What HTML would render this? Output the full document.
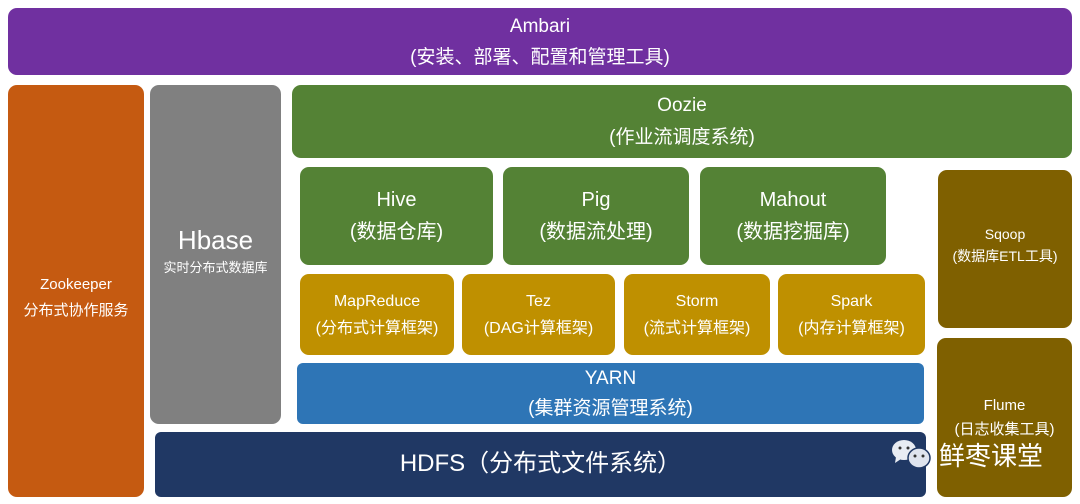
<!DOCTYPE html><html><head><meta charset="utf-8"><style>
body{margin:0;width:1080px;height:504px;background:#fff;position:relative;overflow:hidden;font-family:"Liberation Sans","Noto Sans CJK SC",sans-serif;color:#fff}
.b{position:absolute;border-radius:9px;display:flex;flex-direction:column;align-items:center;justify-content:center;text-align:center;line-height:1.6}
</style></head><body>
<div class="b" style="left:8px;top:8px;width:1064px;height:67px;background:#7030a0;font-size:19px;line-height:31px">Ambari<br>(安装、部署、配置和管理工具)</div>
<div class="b" style="left:8px;top:85px;width:136px;height:412px;background:#c55a11;font-size:15px;line-height:26px;padding-top:14px;box-sizing:border-box">Zookeeper<br>分布式协作服务</div>
<div class="b" style="left:150px;top:85px;width:131px;height:339px;background:#808080;font-size:13px;line-height:20px"><span style="font-size:26px;line-height:36px;margin-top:-10px">Hbase</span>实时分布式数据库</div>
<div class="b" style="left:292px;top:85px;width:780px;height:73px;background:#548235;font-size:19px;line-height:32px">Oozie<br>(作业流调度系统)</div>
<div class="b" style="left:300px;top:167px;width:193px;height:98px;background:#548235;font-size:20px;line-height:32px">Hive<br>(数据仓库)</div>
<div class="b" style="left:503px;top:167px;width:186px;height:98px;background:#548235;font-size:20px;line-height:32px">Pig<br>(数据流处理)</div>
<div class="b" style="left:700px;top:167px;width:186px;height:98px;background:#548235;font-size:20px;line-height:32px">Mahout<br>(数据挖掘库)</div>
<div class="b" style="left:300px;top:274px;width:154px;height:81px;background:#bf9000;font-size:16px;line-height:27px">MapReduce<br>(分布式计算框架)</div>
<div class="b" style="left:462px;top:274px;width:153px;height:81px;background:#bf9000;font-size:16px;line-height:27px">Tez<br>(DAG计算框架)</div>
<div class="b" style="left:624px;top:274px;width:146px;height:81px;background:#bf9000;font-size:16px;line-height:27px">Storm<br>(流式计算框架)</div>
<div class="b" style="left:778px;top:274px;width:147px;height:81px;background:#bf9000;font-size:16px;line-height:27px">Spark<br>(内存计算框架)</div>
<div class="b" style="left:297px;top:363px;width:627px;height:61px;background:#2e75b6;font-size:19px;line-height:30px;border-radius:6px">YARN<br>(集群资源管理系统)</div>
<div class="b" style="left:155px;top:432px;width:771px;height:65px;background:#203864;font-size:24px;border-radius:6px">HDFS（分布式文件系统）</div>
<div class="b" style="left:938px;top:170px;width:134px;height:158px;background:#7f6000;font-size:14px;line-height:22px;padding-bottom:8px;box-sizing:border-box">Sqoop<br>(数据库ETL工具)</div>
<div class="b" style="left:937px;top:338px;width:135px;height:159px;background:#7f6000;font-size:15px;line-height:24px">Flume<br>(日志收集工具)</div>
<svg style="position:absolute;left:890px;top:438px" width="50" height="36"><ellipse cx="14" cy="12" rx="12" ry="10" fill="#e8ecf3"/><path d="M6 19 L5 25 L11 21Z" fill="#e8ecf3"/><ellipse cx="29" cy="20" rx="11" ry="10" fill="#dfe4ee" stroke="#203864" stroke-width="1.5"/><circle cx="10" cy="10" r="1.5" fill="#333"/><circle cx="18" cy="10" r="1.5" fill="#333"/><circle cx="25" cy="18" r="1.5" fill="#333"/><circle cx="33" cy="18" r="1.5" fill="#333"/></svg>
<div style="position:absolute;left:939px;top:440px;font-size:26px;line-height:32px;color:#fff">鲜枣课堂</div>
</body></html>
